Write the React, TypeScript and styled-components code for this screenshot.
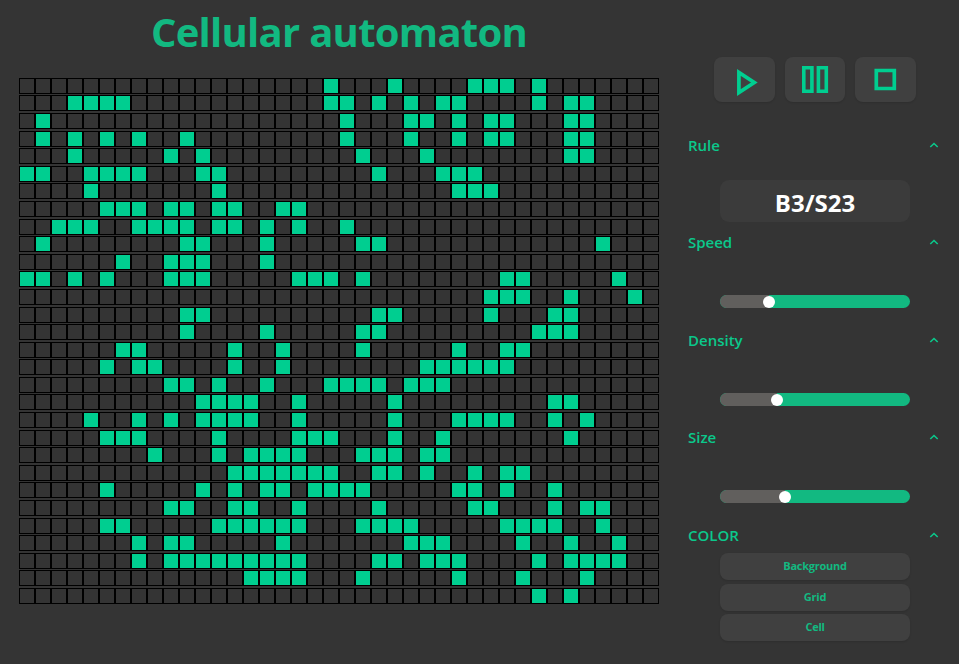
import React from "react";
import styled, { createGlobalStyle } from "styled-components";

const Global = createGlobalStyle`
  * { box-sizing: border-box; }
  html, body { margin: 0; background: #343434; }
  body { overflow: hidden; font-family: "Open Sans", "Noto Sans", sans-serif; }
  button { font-family: inherit; }
`;

const Page = styled.div`
  display: flex;
  width: 959px;
  height: 664px;
  background: #343434;
`;

const Main = styled.main`
  width: 640px;
  margin-left: 19px;
`;

const Title = styled.h1`
  margin: 0;
  height: 77.8px;
  padding-top: 4px;
  text-align: center;
  white-space: nowrap;
  font-size: 40px;
  line-height: 56px;
  font-weight: 700;
  letter-spacing: -0.72px;
  color: #12b981;
`;

const Board = styled.div`
  display: flex;
  flex-direction: column;
  gap: 1.59375px;
`;

const BoardRow = styled.div`
  display: flex;
  height: 16px;
`;

const Cell = styled.div<{ $alive: boolean }>`
  width: 16px;
  height: 16px;
  border: 1px solid #000;
  background: ${(p) => (p.$alive ? "#00ce90" : "#343434")};
`;

const Sidebar = styled.aside`
  display: flex;
  flex-direction: column;
  width: 254px;
  margin-left: 29px;
`;

const Controls = styled.div`
  display: flex;
  gap: 10px;
  margin: 57px 0 0 26px;
  height: 45px;
`;

const ControlButton = styled.button<{ $width: number }>`
  display: flex;
  width: ${(p) => p.$width}px;
  height: 45px;
  padding: 0;
  border: 0;
  border-radius: 8px;
  background: #404040;
  box-shadow: 0 1px 2px rgba(0, 0, 0, 0.12);
  svg { display: block; width: 100%; height: 100%; fill: none; stroke: #00ce90; }
`;

const Sections = styled.div`
  display: flex;
  flex-direction: column;
  margin-top: 31px;
`;

const Section = styled.section<{ $height: number }>`
  height: ${(p) => p.$height}px;
`;

const SectionHead = styled.div`
  display: flex;
  justify-content: space-between;
  align-items: center;
  height: 25px;
  padding-right: 3px;
  svg { display: block; margin-top: -1px; }
`;

const SectionName = styled.h2`
  margin: 0;
  font-size: 15px;
  line-height: 25px;
  font-weight: 600;
  color: #0bc88b;
`;

const RuleBox = styled.div`
  width: 190px;
  height: 42px;
  margin: 22px 0 0 32px;
  border-radius: 9px;
  background: #3b3b3b;
  text-align: center;
  font-size: 24px;
  line-height: 45px;
  font-weight: 700;
  color: #fff;
`;

const Track = styled.div`
  display: flex;
  align-items: flex-end;
  width: 190px;
  height: 13px;
  margin: 40px 0 0 32px;
  border-radius: 6.5px;
  overflow: hidden;
  background: #12b981;
`;

const Filled = styled.div<{ $width: number }>`
  flex: none;
  width: ${(p) => p.$width}px;
  height: 13px;
  background: #615f5d;
`;

const Thumb = styled.div`
  flex: none;
  width: 12px;
  height: 12px;
  margin-left: -6px;
  border-radius: 50%;
  background: #fff;
`;

const ColorList = styled.div`
  display: flex;
  flex-direction: column;
  gap: 3.5px;
  margin: 5px 0 0 32px;
`;

const ColorButton = styled.button`
  width: 190px;
  height: 27px;
  padding: 0 0 2px;
  border: 0;
  border-radius: 8px;
  background: #404040;
  box-shadow: 0 1px 2px rgba(0, 0, 0, 0.12);
  font-size: 11px;
  line-height: 25px;
  font-weight: 700;
  letter-spacing: -0.25px;
  color: #12b981;
`;

// Live columns of every generation row; "a-b" is an inclusive run.
const ROWS = [
  "19 23 28-30 32",
  "3-6 19-20 22 24 26-27 32 34-35",
  "1 20 24-25 27 29-30 34-35",
  "1 3 5 7 10 20 24 27 29-30 34-35",
  "3 9 11 21 25 34-35",
  "0-1 4-7 11-12 22 26-28",
  "4 12 27-29",
  "5-7 9-10 12-13 16-17",
  "2-4 7-10 12-13 15 17 20",
  "1 10-11 15 21-22 36",
  "6 9-11 15",
  "0-1 3 5 9-11 17-19 21 30-31 37",
  "29-31 34 38",
  "10-11 22-23 29 33-34",
  "10 15 21-22 32-34",
  "6-7 13 16 21 27 30-31",
  "5 7-8 13 16 25-30",
  "9-10 12 15 19-22 24-26",
  "11-14 17 23 33-34",
  "4 7 9 11-14 17 23 27-30 33 35",
  "5-7 12 17-19 23 26 34",
  "8 12 14-17 21-23 25-26",
  "13-19 22-23 25 28 30-31",
  "5 11 13 15-16 18-21 27-28 30 33",
  "9-10 13-14 17 22 28-29 33 35-36",
  "5-6 12-17 21-24 30-33 36",
  "7 9-10 16 24-26 31 34 37",
  "7 9-17 22-23 25-27 32 34-37",
  "14-17 21 27 31 35",
  "32 34",
];

const COLUMNS = 40;

function parseRow(text: string): boolean[] {
  const cells: boolean[] = new Array(COLUMNS).fill(false);
  text.split(" ").forEach((part) => {
    const [from, to = from] = part.split("-").map(Number);
    cells.fill(true, from, to + 1);
  });
  return cells;
}

const Chevron = () => (
  <svg width="10" height="8" viewBox="0 0 10 8" fill="none" stroke="#0bc88b" strokeWidth="1.6">
    <path d="M1.3 6 5 2.5 8.7 6" />
  </svg>
);

function Panel(props: { name: string; height: number; children: React.ReactNode }) {
  return (
    <Section $height={props.height}>
      <SectionHead>
        <SectionName>{props.name}</SectionName>
        <Chevron />
      </SectionHead>
      {props.children}
    </Section>
  );
}

const Slider = ({ value }: { value: number }) => (
  <Track>
    <Filled $width={value} />
    <Thumb />
  </Track>
);

export default function App() {
  return (
    <>
      <Global />
      <Page>
        <Main>
          <Title>Cellular automaton</Title>
          <Board>
            {ROWS.map((row, y) => (
              <BoardRow key={y}>
                {parseRow(row).map((alive, x) => (
                  <Cell key={x} $alive={alive} />
                ))}
              </BoardRow>
            ))}
          </Board>
        </Main>
        <Sidebar>
          <Controls>
            <ControlButton $width={61} aria-label="Play">
              <svg viewBox="0 0 61 45" strokeWidth="3.7">
                <path d="M24.9 15.5v20L40.3 25.5z" />
              </svg>
            </ControlButton>
            <ControlButton $width={60} aria-label="Pause">
              <svg viewBox="0 0 60 45" strokeWidth="3.6">
                <path d="M18.8 10.8h8.1v23.4h-8.1zM33.4 10.8h7.9v23.4h-7.9z" />
              </svg>
            </ControlButton>
            <ControlButton $width={61} aria-label="Stop">
              <svg viewBox="0 0 61 45" strokeWidth="3.7">
                <path d="M21.3 13.5h18v18h-18z" />
              </svg>
            </ControlButton>
          </Controls>
          <Sections>
            <Panel name="Rule" height={97}>
              <RuleBox>B3/S23</RuleBox>
            </Panel>
            <Panel name="Speed" height={98}>
              <Slider value={49} />
            </Panel>
            <Panel name="Density" height={97}>
              <Slider value={57} />
            </Panel>
            <Panel name="Size" height={98}>
              <Slider value={65} />
            </Panel>
            <Panel name="COLOR" height={120}>
              <ColorList>
                <ColorButton>Background</ColorButton>
                <ColorButton>Grid</ColorButton>
                <ColorButton>Cell</ColorButton>
              </ColorList>
            </Panel>
          </Sections>
        </Sidebar>
      </Page>
    </>
  );
}
